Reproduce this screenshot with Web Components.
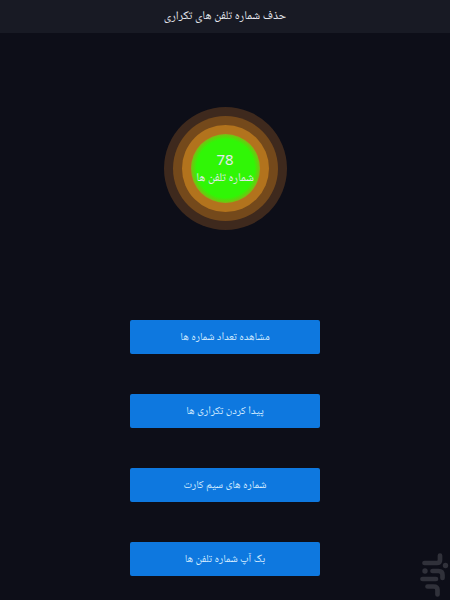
<!DOCTYPE html>
<html lang="fa" dir="rtl">
<head>
<meta charset="utf-8">
<meta name="viewport" content="width=device-width, initial-scale=1">
<title>حذف شماره تلفن های تکراری</title>
<style>
    body {
        margin: 0;
        background: #0d0e18;
        color: #e6e8ee;
        font-family: "Noto Naskh Arabic UI", "Noto Naskh Arabic", "Droid Arabic Naskh", "Noto Sans", sans-serif;
    }
</style>
</head>
<body>

<phone-app>
    <app-bar slot="bar">حذف شماره تلفن های تکراری</app-bar>
    <pulse-counter slot="counter" value="78">شماره تلفن ها</pulse-counter>
    <menu-button>مشاهده تعداد شماره ها</menu-button>
    <menu-button>پیدا کردن تکراری ها</menu-button>
    <menu-button>شماره های سیم کارت</menu-button>
    <menu-button>بک آپ شماره تلفن ها</menu-button>
    <store-mark slot="mark"></store-mark>
</phone-app>

<script>
// ╭───────────────────────────────────────────────────────╮
// │                        HELPER                         │
// ╰───────────────────────────────────────────────────────╯
function makeTemplate(html) {
    const template = document.createElement('template');
    template.innerHTML = html;
    return template;
}

// ╭───────────────────────────────────────────────────────╮
// │                       TEMPLATES                       │
// ╰───────────────────────────────────────────────────────╯
const appTemplate = makeTemplate(/* html */`
    <style>
        :host {
            /* Position */
            display: flex;
            flex-direction: column;
            position: relative;

            /* Size */
            box-sizing: border-box;
            min-height: 100vh;
        }

        .counter {
            display: flex;
            justify-content: center;
            padding: 74px 16px 90px;
        }

        nav {
            display: flex;
            flex-direction: column;
            align-items: center;
            gap: 40px;
            padding: 0 16px 23px;
        }

        /* Lies over the page's corner */
        .mark {
            position: absolute;
            right: 0;
            bottom: 2px;
        }
    </style>

    <slot name="bar"></slot>
    <main>
        <div class="counter"><slot name="counter"></slot></div>
        <nav><slot></slot></nav>
    </main>
    <div class="mark"><slot name="mark"></slot></div>
`);

const barTemplate = makeTemplate(/* html */`
    <style>
        :host {
            display: block;
            background: #181a24;
        }

        h1 {
            /* Size */
            margin: 0;
            padding: 5px 16px 4px;

            /* Presentation */
            font-size: 12px;
            font-weight: 400;
            line-height: 24px;
            text-align: center;
        }
    </style>

    <header><h1><slot></slot></h1></header>
`);

const counterTemplate = makeTemplate(/* html */`
    <style>
        :host {
            display: block;
            border-radius: 50%;
            background: #3e291d;
        }

        .ring {
            padding: 9px;
            border-radius: 50%;
        }

        .middle { background: #74491b; }
        .inner  { background: #b2731d; }

        .disc {
            /* Position */
            display: flex;
            flex-direction: column;
            align-items: center;
            justify-content: center;

            /* Size */
            width: 69px;
            height: 69px;

            /* Presentation */
            border-radius: 50%;
            background: radial-gradient(closest-side, #30f606 84%, #7bbd12);
            white-space: nowrap;
        }

        .value {
            font-family: "Noto Sans", sans-serif;
            font-size: 15px;
            line-height: 20px;
        }

        .label {
            font-size: 12px;
            line-height: 20px;
        }
    </style>

    <div class="ring outer">
        <div class="ring middle">
            <div class="ring inner">
                <div class="disc">
                    <span class="value"></span>
                    <span class="label"><slot></slot></span>
                </div>
            </div>
        </div>
    </div>
`);

const buttonTemplate = makeTemplate(/* html */`
    <style>
        :host {
            display: block;
            width: 190px;
            max-width: 100%;
        }

        button {
            /* Size */
            display: block;
            width: 100%;
            margin: 0;
            padding: 5px 8px;

            /* Presentation */
            border: 0;
            border-radius: 2px;
            background: #0e78df;
            color: #d4ecff;
            font: inherit;
            font-size: 11px;
            line-height: 24px;
            cursor: pointer;
        }
    </style>

    <button type="button"><slot></slot></button>
`);

const markTemplate = makeTemplate(/* html */`
    <style>
        :host { display: block; }
        svg   { display: block; }
    </style>

    <svg width="30" height="46" viewBox="0 0 30 46" aria-hidden="true"
         fill="none" stroke="#30313a" stroke-width="4.7" stroke-linecap="round">
        <path d="M20 3.5V8Q20 11 17 11H4.5"/>
        <path d="M12.5 19H18.5Q22.5 19 22.5 23V26"/>
        <path d="M2.5 27H16"/>
        <path d="M7.5 34.5H13.5Q17.5 34.5 17.5 38V42.5"/>
        <g fill="#30313a" stroke="none">
            <circle cx="25.5" cy="13.5" r="2.7"/>
            <circle cx="5" cy="19" r="2.7"/>
        </g>
    </svg>
`);

// ╭───────────────────────────────────────────────────────╮
// │                  DEFINE WEBCOMPONENTS                 │
// ╰───────────────────────────────────────────────────────╯
class TemplateElement extends HTMLElement {

    constructor() {
        super();
        this.attachShadow({ mode: "open" });
        this.shadowRoot.appendChild(this.constructor.template.content.cloneNode(true));
    }

}

class PhoneApp extends TemplateElement {
    static template = appTemplate;
}

class AppBar extends TemplateElement {
    static template = barTemplate;
}

class PulseCounter extends TemplateElement {
    static template = counterTemplate;
    static observedAttributes = ["value"];

    attributeChangedCallback(name, oldValue, newValue) {
        this.shadowRoot.querySelector('.value').textContent = newValue;
    }
}

class MenuButton extends TemplateElement {
    static template = buttonTemplate;
}

class StoreMark extends TemplateElement {
    static template = markTemplate;
}

customElements.define("phone-app", PhoneApp);
customElements.define("app-bar", AppBar);
customElements.define("pulse-counter", PulseCounter);
customElements.define("menu-button", MenuButton);
customElements.define("store-mark", StoreMark);
</script>
</body>
</html>
